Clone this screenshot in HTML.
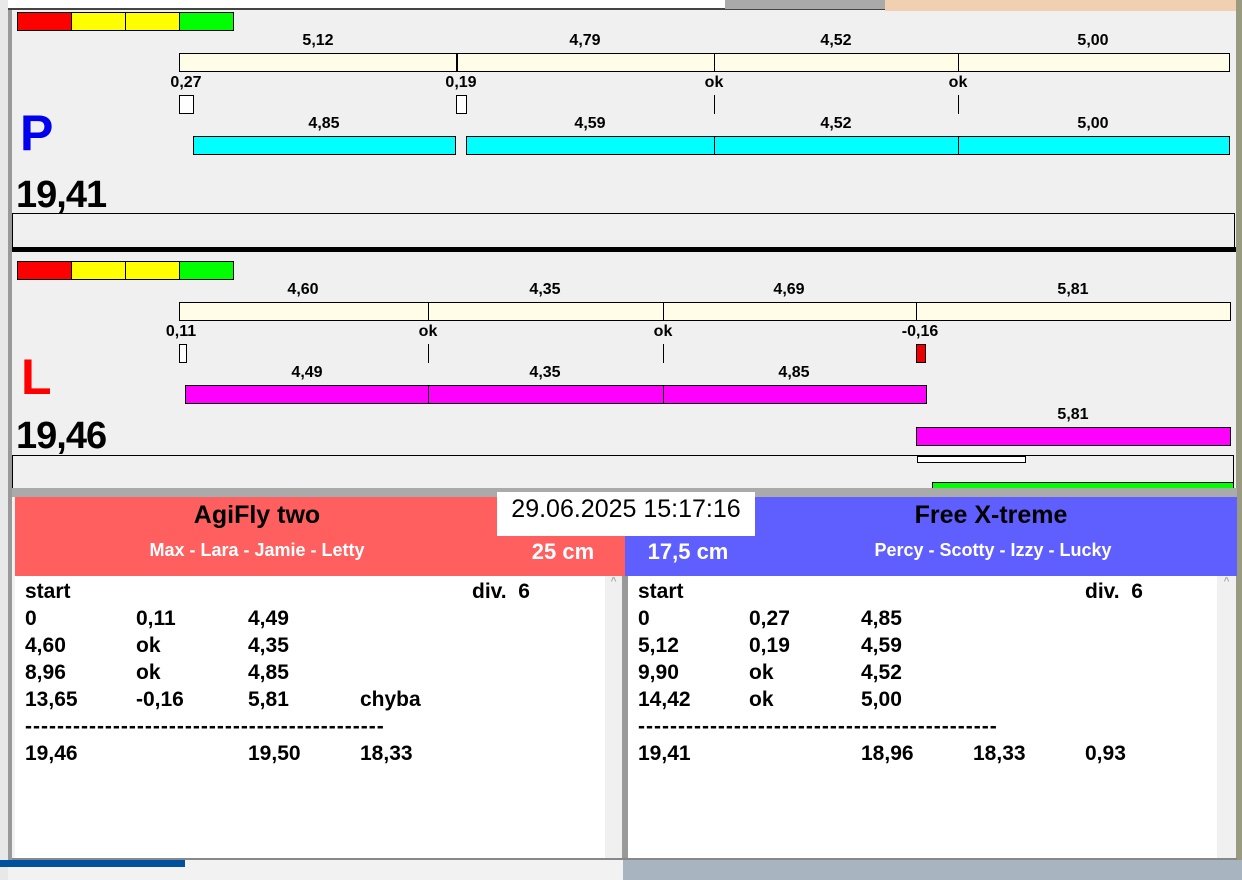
<!DOCTYPE html>
<html><head><meta charset="utf-8"><style>
*{margin:0;padding:0;box-sizing:border-box}
body{width:1242px;height:880px;position:relative;overflow:hidden;background:#f2f2f2;font-family:"Liberation Sans",Arial,sans-serif;font-weight:bold;color:#000}
div{position:absolute}
.b{border:1px solid #000}
.t{font-size:16px;line-height:16px;transform:translateX(-50%);white-space:nowrap}
.r{font-size:21px;line-height:22px;white-space:nowrap}
.d{letter-spacing:1px}
.v{width:1px;background:#000}
</style></head><body>
<div style="left:0;top:0;width:885px;height:10px;background:#fff;border-bottom:2px solid #444"></div>
<div style="left:725px;top:0;width:160px;height:9px;background:#aaa"></div>
<div style="left:885px;top:0;width:357px;height:12px;background:#f0d0b0"></div>
<div style="left:1236px;top:0;width:6px;height:880px;background:#9a9a80"></div>
<div style="left:0;top:0;width:8px;height:880px;background:#e8e8e8"></div>
<div style="left:8px;top:10px;width:4px;height:850px;background:#999"></div>
<div style="left:12px;top:11px;width:1224px;height:480px;background:#f0f0f0"></div>

<div class="b" style="left:17px;top:12px;width:55px;height:19px;background:#f00"></div>
<div class="b" style="left:71px;top:12px;width:55px;height:19px;background:#ff0"></div>
<div class="b" style="left:125px;top:12px;width:55px;height:19px;background:#ff0"></div>
<div class="b" style="left:179px;top:12px;width:55px;height:19px;background:#0f0"></div>

<div class="t" style="left:318px;top:33px">5,12</div>
<div class="t" style="left:585px;top:33px">4,79</div>
<div class="t" style="left:836px;top:33px">4,52</div>
<div class="t" style="left:1093px;top:33px">5,00</div>
<div class="b" style="left:179px;top:53px;width:1051px;height:19px;background:#fffde8"></div>
<div class="v" style="left:456px;top:53px;height:19px;width:2px"></div>
<div class="v" style="left:714px;top:53px;height:19px"></div>
<div class="v" style="left:958px;top:53px;height:19px"></div>
<div class="t" style="left:186px;top:75px">0,27</div>
<div class="t" style="left:461px;top:75px">0,19</div>
<div class="t" style="left:714px;top:75px">ok</div>
<div class="t" style="left:958px;top:75px">ok</div>
<div class="b" style="left:179px;top:95px;width:15px;height:19px;background:#fff"></div>
<div class="b" style="left:456px;top:95px;width:11px;height:19px;background:#fff"></div>
<div class="v" style="left:714px;top:95px;height:19px"></div>
<div class="v" style="left:958px;top:95px;height:19px"></div>
<div style="left:20px;top:108px;font-size:50px;line-height:50px;color:#0000ee">P</div>
<div class="t" style="left:324px;top:116px">4,85</div>
<div class="t" style="left:590px;top:116px">4,59</div>
<div class="t" style="left:836px;top:116px">4,52</div>
<div class="t" style="left:1093px;top:116px">5,00</div>
<div class="b" style="left:193px;top:136px;width:263px;height:19px;background:#0ff"></div>
<div class="b" style="left:466px;top:136px;width:764px;height:19px;background:#0ff"></div>
<div class="v" style="left:714px;top:136px;height:19px"></div>
<div class="v" style="left:958px;top:136px;height:19px"></div>
<div style="left:16px;top:175px;font-size:38px;line-height:40px;letter-spacing:-1px">19,41</div>
<div class="b" style="left:12px;top:213px;width:1223px;height:36px;border-right:1px solid #000"></div>
<div style="left:12px;top:247px;width:1224px;height:5px;background:#000"></div>

<div class="b" style="left:17px;top:261px;width:55px;height:19px;background:#f00"></div>
<div class="b" style="left:71px;top:261px;width:55px;height:19px;background:#ff0"></div>
<div class="b" style="left:125px;top:261px;width:55px;height:19px;background:#ff0"></div>
<div class="b" style="left:179px;top:261px;width:55px;height:19px;background:#0f0"></div>
<div class="t" style="left:303px;top:282px">4,60</div>
<div class="t" style="left:545px;top:282px">4,35</div>
<div class="t" style="left:789px;top:282px">4,69</div>
<div class="t" style="left:1073px;top:282px">5,81</div>
<div class="b" style="left:179px;top:302px;width:1052px;height:19px;background:#fffde8"></div>
<div class="v" style="left:428px;top:302px;height:19px"></div>
<div class="v" style="left:663px;top:302px;height:19px"></div>
<div class="v" style="left:916px;top:302px;height:19px"></div>
<div class="t" style="left:181px;top:324px">0,11</div>
<div class="t" style="left:428px;top:324px">ok</div>
<div class="t" style="left:663px;top:324px">ok</div>
<div class="t" style="left:920px;top:324px">-0,16</div>
<div class="b" style="left:179px;top:344px;width:8px;height:19px;background:#fff"></div>
<div class="v" style="left:428px;top:344px;height:19px"></div>
<div class="v" style="left:663px;top:344px;height:19px"></div>
<div class="b" style="left:916px;top:344px;width:10px;height:19px;background:#e00"></div>
<div style="left:21px;top:352px;font-size:50px;line-height:50px;color:#f00">L</div>
<div class="t" style="left:307px;top:365px">4,49</div>
<div class="t" style="left:545px;top:365px">4,35</div>
<div class="t" style="left:794px;top:365px">4,85</div>
<div class="b" style="left:185px;top:385px;width:742px;height:19px;background:#f0f"></div>
<div class="v" style="left:428px;top:385px;height:19px"></div>
<div class="v" style="left:663px;top:385px;height:19px"></div>
<div class="t" style="left:1073px;top:407px">5,81</div>
<div class="b" style="left:916px;top:427px;width:315px;height:19px;background:#f0f"></div>
<div style="left:16px;top:416px;font-size:38px;line-height:40px;letter-spacing:-1px">19,46</div>
<div class="b" style="left:12px;top:455px;width:1222px;height:40px"></div>
<div class="b" style="left:917px;top:456px;width:109px;height:7px;background:#fff"></div>
<div class="b" style="left:932px;top:482px;width:302px;height:10px;background:#0f0"></div>

<div style="left:12px;top:488px;width:1225px;height:9px;background:#aaa"></div>
<div style="left:15px;top:497px;width:610px;height:79px;background:#ff5f5f"></div>
<div style="left:625px;top:497px;width:612px;height:79px;background:#5f5fff"></div>
<div style="left:497px;top:492px;width:258px;height:44px;background:#fff;font-weight:normal;font-size:25px;line-height:34px;text-align:center">29.06.2025 15:17:16</div>
<div class="t" style="left:257px;top:502px;font-size:25px;line-height:26px">AgiFly two</div>
<div class="t" style="left:257px;top:540px;font-size:18px;line-height:20px;color:#fff">Max - Lara - Jamie - Letty</div>
<div class="t" style="left:563px;top:540px;font-size:22px;line-height:24px;color:#fff">25 cm</div>
<div class="t" style="left:991px;top:502px;font-size:25px;line-height:26px">Free X-treme</div>
<div class="t" style="left:993px;top:540px;font-size:18px;line-height:20px;color:#fff">Percy - Scotty - Izzy - Lucky</div>
<div class="t" style="left:688px;top:540px;font-size:22px;line-height:24px;color:#fff">17,5 cm</div>

<div style="left:15px;top:576px;width:590px;height:283px;background:#fff"></div>
<div style="left:605px;top:576px;width:17px;height:283px;background:#f0f0f0;color:#aaa;font-size:10px;text-align:center">^</div>
<div style="left:622px;top:576px;width:6px;height:283px;background:#999"></div>
<div style="left:628px;top:576px;width:590px;height:283px;background:#fff"></div>
<div style="left:1217px;top:576px;width:19px;height:283px;background:#f0f0f0;color:#aaa;font-size:10px;text-align:center">^</div>
<div style="left:12px;top:858px;width:1225px;height:2px;background:#888"></div>
<div style="left:0;top:860px;width:185px;height:7px;background:#0050a0"></div>
<div style="left:623px;top:860px;width:619px;height:20px;background:#a8b4c0"></div>

<div class="r" style="left:25px;top:581px">start</div><div class="r" style="left:472px;top:581px">div.&nbsp; 6</div>
<div class="r" style="left:25px;top:608px">0</div><div class="r" style="left:136px;top:608px">0,11</div><div class="r" style="left:248px;top:608px">4,49</div>
<div class="r" style="left:25px;top:635px">4,60</div><div class="r" style="left:136px;top:635px">ok</div><div class="r" style="left:248px;top:635px">4,35</div>
<div class="r" style="left:25px;top:662px">8,96</div><div class="r" style="left:136px;top:662px">ok</div><div class="r" style="left:248px;top:662px">4,85</div>
<div class="r" style="left:25px;top:689px">13,65</div><div class="r" style="left:136px;top:689px">-0,16</div><div class="r" style="left:248px;top:689px">5,81</div><div class="r" style="left:360px;top:689px">chyba</div>
<div class="r d" style="left:25px;top:716px">---------------------------------------------</div>
<div class="r" style="left:25px;top:743px">19,46</div><div class="r" style="left:248px;top:743px">19,50</div><div class="r" style="left:360px;top:743px">18,33</div>
<div class="r" style="left:638px;top:581px">start</div><div class="r" style="left:1085px;top:581px">div.&nbsp; 6</div>
<div class="r" style="left:638px;top:608px">0</div><div class="r" style="left:749px;top:608px">0,27</div><div class="r" style="left:861px;top:608px">4,85</div>
<div class="r" style="left:638px;top:635px">5,12</div><div class="r" style="left:749px;top:635px">0,19</div><div class="r" style="left:861px;top:635px">4,59</div>
<div class="r" style="left:638px;top:662px">9,90</div><div class="r" style="left:749px;top:662px">ok</div><div class="r" style="left:861px;top:662px">4,52</div>
<div class="r" style="left:638px;top:689px">14,42</div><div class="r" style="left:749px;top:689px">ok</div><div class="r" style="left:861px;top:689px">5,00</div>
<div class="r d" style="left:638px;top:716px">---------------------------------------------</div>
<div class="r" style="left:638px;top:743px">19,41</div><div class="r" style="left:861px;top:743px">18,96</div><div class="r" style="left:973px;top:743px">18,33</div><div class="r" style="left:1085px;top:743px">0,93</div>
</body></html>
